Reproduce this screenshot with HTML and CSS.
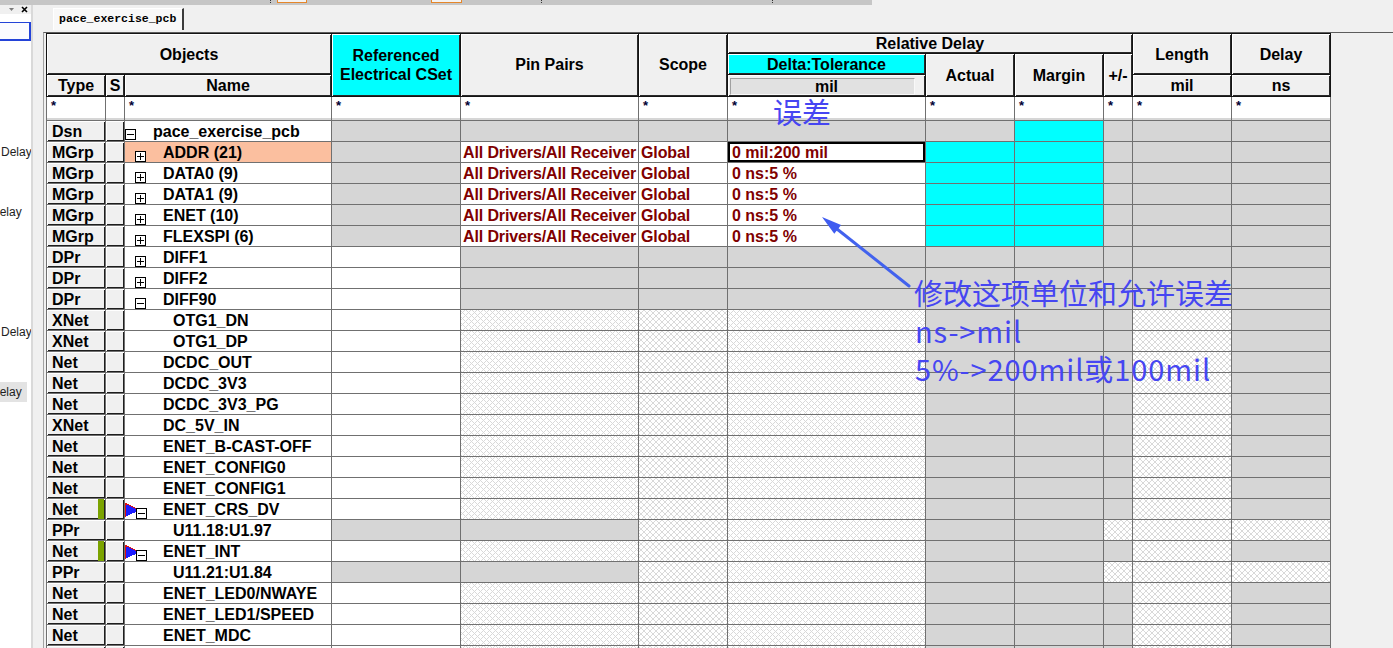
FILE: index.html
```html
<!DOCTYPE html>
<html>
<head>
<meta charset="utf-8">
<link rel="stylesheet" href="styles.css">
</head>
<body>
<div class="topstrip">
  <i class="tb-dot m270"></i><i class="tb-btn m6 w30"></i><i class="tb-btn m125 w31"></i><i class="tb-dot m79"></i><i class="tb-dot m230"></i>
</div>
<div class="app">
  <aside class="side">
    <div class="side-head">
      <svg width="31" height="9" class="sh-ico"><polygon points="9,3 14,3 11.5,6" fill="#7a7a7a"/><path d="M22 2l5 5M27 2l-5 5" stroke="#000" stroke-width="1.6"/></svg>
    </div>
    <div class="side-body">
      <div class="selbox"></div>
      <div class="lbl g101">Delay</div>
      <div class="lbl g40 cut">Delay</div>
      <div class="lbl g100">Delay</div>
      <div class="lbl g40 cut on">Delay</div>
    </div>
  </aside>
  <div class="sep"></div>
  <main class="main">
    <div class="tabs"><div class="tab">pace_exercise_pcb</div></div>
    <div class="view">
      <div class="grid head">
        <div class="hc objects">Objects</div>
        <div class="hc c-type">Type</div>
        <div class="hc c-s">S</div>
        <div class="hc c-name">Name</div>
        <div class="hc ref">Referenced<br>Electrical CSet</div>
        <div class="hc pin">Pin Pairs</div>
        <div class="hc scope">Scope</div>
        <div class="hc reld">Relative Delay</div>
        <div class="hc delta">Delta:Tolerance</div>
        <div class="hc deltau"><span class="ubox">mil</span></div>
        <div class="hc actual">Actual</div>
        <div class="hc margin">Margin</div>
        <div class="hc pm">+/-</div>
        <div class="hc length">Length</div>
        <div class="hc delay">Delay</div>
        <div class="hc lenu">mil</div>
        <div class="hc dlyu">ns</div>
      </div>
      <div class="grid body">
        <div class="f">*</div><div class="f"></div><div class="f">*</div><div class="f">*</div><div class="f">*</div><div class="f">*</div><div class="f">*</div><div class="f">*</div><div class="f">*</div><div class="f">*</div><div class="f">*</div><div class="f">*</div>

        <div class="t">Dsn</div><div class="s"></div>
        <div class="n"><svg class="tw" width="28" height="20"><rect x="0.5" y="8.5" width="10" height="10"/><path d="M2 13.5h7"/></svg><span>pace_exercise_pcb</span></div>
        <div class="g"></div><div class="g"></div><div class="g"></div><div class="g"></div><div class="g"></div><div class="c"></div><div class="g"></div><div class="g"></div><div class="g"></div>

        <div class="t">MGrp</div><div class="s"></div>
        <div class="n sel"><svg class="tw" width="38" height="20"><rect x="10.5" y="9.5" width="10" height="10"/><path d="M12 14.5h7M15.5 11v7"/></svg><span>ADDR (21)</span></div>
        <div class="g"></div><div class="w r pp">All Drivers/All Receiver</div><div class="w r pp">Global</div><div class="w r dt cur">0 mil:200 mil</div><div class="c"></div><div class="c"></div><div class="g"></div><div class="g"></div><div class="g"></div>

        <div class="t">MGrp</div><div class="s"></div>
        <div class="n"><svg class="tw" width="38" height="20"><rect x="10.5" y="9.5" width="10" height="10"/><path d="M12 14.5h7M15.5 11v7"/></svg><span>DATA0 (9)</span></div>
        <div class="g"></div><div class="w r pp">All Drivers/All Receiver</div><div class="w r pp">Global</div><div class="w r dt">0 ns:5 %</div><div class="c"></div><div class="c"></div><div class="g"></div><div class="g"></div><div class="g"></div>

        <div class="t">MGrp</div><div class="s"></div>
        <div class="n"><svg class="tw" width="38" height="20"><rect x="10.5" y="9.5" width="10" height="10"/><path d="M12 14.5h7M15.5 11v7"/></svg><span>DATA1 (9)</span></div>
        <div class="g"></div><div class="w r pp">All Drivers/All Receiver</div><div class="w r pp">Global</div><div class="w r dt">0 ns:5 %</div><div class="c"></div><div class="c"></div><div class="g"></div><div class="g"></div><div class="g"></div>

        <div class="t">MGrp</div><div class="s"></div>
        <div class="n"><svg class="tw" width="38" height="20"><rect x="10.5" y="9.5" width="10" height="10"/><path d="M12 14.5h7M15.5 11v7"/></svg><span>ENET (10)</span></div>
        <div class="g"></div><div class="w r pp">All Drivers/All Receiver</div><div class="w r pp">Global</div><div class="w r dt">0 ns:5 %</div><div class="c"></div><div class="c"></div><div class="g"></div><div class="g"></div><div class="g"></div>

        <div class="t">MGrp</div><div class="s"></div>
        <div class="n"><svg class="tw" width="38" height="20"><rect x="10.5" y="9.5" width="10" height="10"/><path d="M12 14.5h7M15.5 11v7"/></svg><span>FLEXSPI (6)</span></div>
        <div class="g"></div><div class="w r pp">All Drivers/All Receiver</div><div class="w r pp">Global</div><div class="w r dt">0 ns:5 %</div><div class="c"></div><div class="c"></div><div class="g"></div><div class="g"></div><div class="g"></div>

        <div class="t">DPr</div><div class="s"></div>
        <div class="n"><svg class="tw" width="38" height="20"><rect x="10.5" y="9.5" width="10" height="10"/><path d="M12 14.5h7M15.5 11v7"/></svg><span>DIFF1</span></div>
        <div class="w"></div><div class="g"></div><div class="g"></div><div class="g"></div><div class="g"></div><div class="g"></div><div class="g"></div><div class="g"></div><div class="g"></div>

        <div class="t">DPr</div><div class="s"></div>
        <div class="n"><svg class="tw" width="38" height="20"><rect x="10.5" y="9.5" width="10" height="10"/><path d="M12 14.5h7M15.5 11v7"/></svg><span>DIFF2</span></div>
        <div class="w"></div><div class="g"></div><div class="g"></div><div class="g"></div><div class="g"></div><div class="g"></div><div class="g"></div><div class="g"></div><div class="g"></div>

        <div class="t">DPr</div><div class="s"></div>
        <div class="n"><svg class="tw" width="38" height="20"><rect x="10.5" y="9.5" width="10" height="10"/><path d="M12 14.5h7"/></svg><span>DIFF90</span></div>
        <div class="w"></div><div class="g"></div><div class="g"></div><div class="g"></div><div class="g"></div><div class="g"></div><div class="g"></div><div class="g"></div><div class="g"></div>

        <div class="t">XNet</div><div class="s"></div><div class="n"><i class="sp48"></i><span>OTG1_DN</span></div>
        <div class="w"></div><div class="h"></div><div class="h"></div><div class="h"></div><div class="g"></div><div class="g"></div><div class="g"></div><div class="h"></div><div class="g"></div>

        <div class="t">XNet</div><div class="s"></div><div class="n"><i class="sp48"></i><span>OTG1_DP</span></div>
        <div class="w"></div><div class="h"></div><div class="h"></div><div class="h"></div><div class="g"></div><div class="g"></div><div class="g"></div><div class="h"></div><div class="g"></div>

        <div class="t">Net</div><div class="s"></div><div class="n"><i class="sp38"></i><span>DCDC_OUT</span></div>
        <div class="w"></div><div class="h"></div><div class="h"></div><div class="h"></div><div class="g"></div><div class="g"></div><div class="g"></div><div class="h"></div><div class="g"></div>

        <div class="t">Net</div><div class="s"></div><div class="n"><i class="sp38"></i><span>DCDC_3V3</span></div>
        <div class="w"></div><div class="h"></div><div class="h"></div><div class="h"></div><div class="g"></div><div class="g"></div><div class="g"></div><div class="h"></div><div class="g"></div>

        <div class="t">Net</div><div class="s"></div><div class="n"><i class="sp38"></i><span>DCDC_3V3_PG</span></div>
        <div class="w"></div><div class="h"></div><div class="h"></div><div class="h"></div><div class="g"></div><div class="g"></div><div class="g"></div><div class="h"></div><div class="g"></div>

        <div class="t">XNet</div><div class="s"></div><div class="n"><i class="sp38"></i><span>DC_5V_IN</span></div>
        <div class="w"></div><div class="h"></div><div class="h"></div><div class="h"></div><div class="g"></div><div class="g"></div><div class="g"></div><div class="h"></div><div class="g"></div>

        <div class="t">Net</div><div class="s"></div><div class="n"><i class="sp38"></i><span>ENET_B-CAST-OFF</span></div>
        <div class="w"></div><div class="h"></div><div class="h"></div><div class="h"></div><div class="g"></div><div class="g"></div><div class="g"></div><div class="h"></div><div class="g"></div>

        <div class="t">Net</div><div class="s"></div><div class="n"><i class="sp38"></i><span>ENET_CONFIG0</span></div>
        <div class="w"></div><div class="h"></div><div class="h"></div><div class="h"></div><div class="g"></div><div class="g"></div><div class="g"></div><div class="h"></div><div class="g"></div>

        <div class="t">Net</div><div class="s"></div><div class="n"><i class="sp38"></i><span>ENET_CONFIG1</span></div>
        <div class="w"></div><div class="h"></div><div class="h"></div><div class="h"></div><div class="g"></div><div class="g"></div><div class="g"></div><div class="h"></div><div class="g"></div>

        <div class="t"><span>Net</span><i class="mk"></i></div><div class="s"></div>
        <div class="n"><svg class="tw" width="38" height="20"><polygon class="tri" points="0,4 15,11 0,18"/><path class="tri-e" d="M0.5 18V4.5L14 11"/><rect x="11.5" y="9.5" width="10" height="10"/><path d="M13 14.5h7"/></svg><span>ENET_CRS_DV</span></div>
        <div class="w"></div><div class="h"></div><div class="h"></div><div class="h"></div><div class="g"></div><div class="g"></div><div class="g"></div><div class="h"></div><div class="g"></div>

        <div class="t">PPr</div><div class="s"></div><div class="n"><i class="sp48"></i><span>U11.18:U1.97</span></div>
        <div class="g"></div><div class="g"></div><div class="h"></div><div class="h"></div><div class="g"></div><div class="g"></div><div class="h"></div><div class="h"></div><div class="h"></div>

        <div class="t"><span>Net</span><i class="mk"></i></div><div class="s"></div>
        <div class="n"><svg class="tw" width="38" height="20"><polygon class="tri" points="0,4 15,11 0,18"/><path class="tri-e" d="M0.5 18V4.5L14 11"/><rect x="11.5" y="9.5" width="10" height="10"/><path d="M13 14.5h7"/></svg><span>ENET_INT</span></div>
        <div class="w"></div><div class="h"></div><div class="h"></div><div class="h"></div><div class="g"></div><div class="g"></div><div class="g"></div><div class="h"></div><div class="g"></div>

        <div class="t">PPr</div><div class="s"></div><div class="n"><i class="sp48"></i><span>U11.21:U1.84</span></div>
        <div class="g"></div><div class="g"></div><div class="h"></div><div class="h"></div><div class="g"></div><div class="g"></div><div class="h"></div><div class="h"></div><div class="h"></div>

        <div class="t">Net</div><div class="s"></div><div class="n"><i class="sp38"></i><span>ENET_LED0/NWAYE</span></div>
        <div class="w"></div><div class="h"></div><div class="h"></div><div class="h"></div><div class="g"></div><div class="g"></div><div class="g"></div><div class="h"></div><div class="g"></div>

        <div class="t">Net</div><div class="s"></div><div class="n"><i class="sp38"></i><span>ENET_LED1/SPEED</span></div>
        <div class="w"></div><div class="h"></div><div class="h"></div><div class="h"></div><div class="g"></div><div class="g"></div><div class="g"></div><div class="h"></div><div class="g"></div>

        <div class="t">Net</div><div class="s"></div><div class="n"><i class="sp38"></i><span>ENET_MDC</span></div>
        <div class="w"></div><div class="h"></div><div class="h"></div><div class="h"></div><div class="g"></div><div class="g"></div><div class="g"></div><div class="h"></div><div class="g"></div>

        <div class="t"></div><div class="s"></div><div class="n"></div>
        <div class="w"></div><div class="h"></div><div class="h"></div><div class="h"></div><div class="g"></div><div class="g"></div><div class="g"></div><div class="h"></div><div class="g"></div>
      </div>
    </div>
  </main>
</div>

<div class="note n1">误差</div>
<div class="note n2">修改这项单位和允许误差<br><span class="lat">ns-&gt;mil</span><br><span class="lat">5%-&gt;200mil</span>或<span class="lat">100mil</span></div>
<svg class="arrow" width="100" height="80" viewBox="0 0 100 80">
  <line x1="22" y1="19" x2="94" y2="76" stroke="#4262ee" stroke-width="3" stroke-linecap="round"/>
  <polygon points="7,7 19.3,23.7 26.1,15.1" fill="#3f5cf0"/>
</svg>
</body>
</html>
```
FILE: styles.css
```css
* { box-sizing: border-box; }
html, body { margin: 0; height: 648px; overflow: hidden; }
body {
  width: 1393px;
  background: #f0f0f0;
  font-family: "Liberation Sans", Arial, sans-serif;
  color: #000;
  position: relative;
}

/* top toolbar strip */
.topstrip { height: 5px; width: 872px; background: #c6c6c6; display: flex; align-items: flex-start; }
.topstrip i { display: block; flex: none; }
.tb-dot { width: 1px; height: 4px; background: linear-gradient(#333 0 1px, transparent 1px 2px, #333 2px 3px, transparent 3px); }
.tb-btn { height: 3px; border: 1px solid #e5862a; border-top: 0; background: #f3f3f3; }
.m270 { margin-left: 270px; }
.m6 { margin-left: 6px; }
.m125 { margin-left: 124px; }
.m79 { margin-left: 79px; }
.m230 { margin-left: 230px; }
.w30 { width: 30px; }
.w31 { width: 31px; }

.app { display: flex; height: 643px; }

/* left docked panel */
.side { width: 31px; flex: none; display: flex; flex-direction: column; overflow: hidden; }
.side-head { height: 9px; background: #f0f0f0; }
.sh-ico { display: block; }
.side-body { flex: 1; background: #fff; display: flex; flex-direction: column; }
.selbox { margin-top: 8px; margin-left: -2px; width: 33px; height: 19px; border: 2px solid #2443d8; border-top-width: 1px; background: #fbfbff; flex: none; }
.lbl { height: 20px; line-height: 20px; font-size: 12px; color: #1e1e1e; white-space: nowrap; padding-left: 1px; flex: none; }
.lbl.cut { margin-left: -9px; padding-left: 0; }
.lbl.on { background: #e3e3e3; width: 36px; }
.g101 { margin-top: 101px; }
.g40 { margin-top: 40px; }
.g100 { margin-top: 100px; }

.sep { width: 2px; flex: none; background: #d9d9d9; }

.main { flex: 1; min-width: 0; padding-left: 10px; display: flex; flex-direction: column; }
.tabs { height: 27px; padding-top: 3px; padding-left: 10px; flex: none; }
.tab {
  width: 131px; height: 22px;
  background: #f8f8f8;
  border-left: 1px solid #fff; border-top: 1px solid #fff; border-right: 2px solid #3c3c3c;
  font: bold 11.5px/20px "Liberation Mono", "Courier New", monospace;
  padding-left: 5px; white-space: nowrap;
}
.view {
  flex: 1; min-height: 0; overflow: hidden;
  border-top: 1px solid #5c5c5c; border-left: 1px solid #a3a3a3;
  padding-left: 2px;
}

/* grid */
.grid {
  display: grid;
  grid-template-columns: 58px 18px 206px 128px 177px 88px 197px 88px 88px 28px 98px 98px;
  gap: 1px;
  width: 1285px;
}
.head { background: #141414; padding: 1px; grid-template-rows: 19px 20px 21px; }
.body { background: #707070; padding: 0 1px; grid-template-rows: 23px; grid-auto-rows: 20px; }

.hc {
  background: #f0f0f0;
  display: flex; align-items: center; justify-content: center; text-align: center;
  font-weight: bold; font-size: 16px; line-height: 19px;
  box-shadow: inset 1px 1px 0 #fff, inset -1px -1px 0 #2a2a2a;
  white-space: nowrap;
}
.objects { grid-column: 1 / 4; grid-row: 1 / 3; }
.c-type { grid-column: 1; grid-row: 3; }
.c-s { grid-column: 2; grid-row: 3; }
.c-name { grid-column: 3; grid-row: 3; }
.ref { grid-column: 4; grid-row: 1 / 4; background: #00ffff; padding-bottom: 1px; }
.pin { grid-column: 5; grid-row: 1 / 4; padding-bottom: 1px; }
.scope { grid-column: 6; grid-row: 1 / 4; padding-bottom: 1px; }
.reld { grid-column: 7 / 11; grid-row: 1; }
.delta { grid-column: 7; grid-row: 2; background: #00ffff; }
.deltau { grid-column: 7; grid-row: 3; padding: 3px 10px 1px 2px; align-items: stretch; }
.ubox { flex: 1; display: flex; align-items: center; justify-content: center; padding-left: 8px; background: #e1e1e1; border: 1px solid #a0a0a0; border-right-color: #f8f8f8; border-bottom-color: #f8f8f8; }
.actual { grid-column: 8; grid-row: 2 / 4; }
.margin { grid-column: 9; grid-row: 2 / 4; }
.pm { grid-column: 10; grid-row: 2 / 4; }
.length { grid-column: 11; grid-row: 1 / 3; }
.delay { grid-column: 12; grid-row: 1 / 3; }
.lenu { grid-column: 11; grid-row: 3; }
.dlyu { grid-column: 12; grid-row: 3; }

/* body cells */
.body > div { font-weight: bold; font-size: 16px; line-height: 20px; white-space: nowrap; overflow: hidden; }
.body > .t, .body > .n > span, .body > .w, .body > .cur { padding-top: 1px; }
.n > span { display: block; }
.f { background: #fff; font-size: 13px !important; line-height: 14px !important; padding: 2px 0 0 4px; color: #000033; box-shadow: inset 0 -2px 0 #d6d6d6; }
.t, .s { background: #f0f0f0; box-shadow: inset 1px 1px 0 #fff, inset -1px -1px 0 #1e1e1e; }
.t { padding-left: 5px; display: flex; }
.mk { display: block; margin-left: auto; margin-right: 1px; margin-top: -1px; width: 6px; background: #7ba300; }
.n { background: #fff; display: flex; align-items: flex-start; }
.n.sel { background: #fbbf9f; }
.tw { display: block; flex: none; shape-rendering: crispEdges; }
.tw rect { fill: #fff; stroke: #000; stroke-width: 1; }
.tw path { stroke: #000; stroke-width: 1; fill: none; }
.tw .tri { fill: #1c1cff; }
.tw .tri-e { stroke: #e01010; fill: none; }
.sp38 { display: block; flex: none; width: 38px; }
.sp48 { display: block; flex: none; width: 48px; }
.g { background: #d6d6d6; }
.w { background: #fff; }
.c { background: #00ffff; }
.h {
  background:
    repeating-linear-gradient(45deg, #d9d9d9 0 1px, transparent 1px 4.25px),
    repeating-linear-gradient(-45deg, #d9d9d9 0 1px, transparent 1px 4.25px),
    #fff;
}
.r { color: #800000; }
.pp { padding-left: 2px; letter-spacing: -0.12px; }
.dt { padding-left: 4px; }
.cur { box-shadow: inset 0 0 0 2px #000; }

/* annotations drawn over the screenshot */
.note {
  position: absolute;
  color: #4646f2;
  font-family: "Noto Sans CJK SC", "Noto Sans", sans-serif;
  font-size: 29px;
  white-space: nowrap;
}
.n1 { left: 773px; top: 97px; line-height: 29px; }
.n2 { left: 914px; top: 273px; line-height: 38px; }
.lat { letter-spacing: 0.9px; padding-left: 1px; }
.arrow { position: absolute; left: 815px; top: 210px; }
```
